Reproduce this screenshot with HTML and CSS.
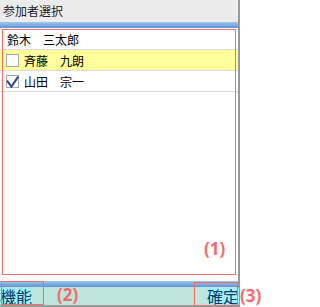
FILE: index.html
```html
<!DOCTYPE html>
<html lang="ja">
<head>
<meta charset="utf-8">
<link rel="stylesheet" href="styles.css">
</head>
<body>
<div class="stage">
  <div class="frame">
    <div class="title">参加者選択</div>
    <div class="bar"></div>
    <div class="list">
      <div class="row"><span class="name plain">鈴木　三太郎</span></div>
      <div class="row selected">
        <span class="check"></span><span class="name">斉藤　九朗</span>
      </div>
      <div class="row">
        <span class="check">
          <svg viewBox="0 0 13 13" width="13" height="13"><path d="M1 5.6 L5.4 11.6 L12.2 1.6" fill="none" stroke="#36458a" stroke-width="2" stroke-linejoin="miter"/></svg>
        </span><span class="name">山田　宗一</span>
      </div>
    </div>
    <div class="bar"></div>
    <div class="footer">
      <span class="softkey">機能</span>
      <span class="softkey">確定</span>
    </div>
  </div>
  <div class="note box1"></div>
  <div class="note label1">(1)</div>
  <div class="note box2"></div>
  <div class="note label2">(2)</div>
  <div class="note box3"></div>
  <div class="note label3">(3)</div>
</div>
</body>
</html>
```
FILE: styles.css
```css
html, body {
  margin: 0;
  padding: 0;
  background: #fff;
}
body {
  font-family: "Noto Sans CJK JP", "Noto Sans", sans-serif;
}
.stage {
  position: relative;
  width: 270px;
  height: 307px;
  overflow: hidden;
}
.frame {
  width: 238px;
  height: 305px;
  border-right: 2px solid #9a9a9a;
  border-bottom: 2px solid #9a9a9a;
  display: flex;
  flex-direction: column;
}
.title {
  height: 22px;
  background: #ececec;
  font-size: 12px;
  line-height: 22px;
  padding-left: 3px;
  color: #222;
}
.bar {
  height: 6px;
  background: linear-gradient(#a3c6ea, #5d97d6);
}
.list {
  flex: 1;
  padding-top: 1px;
  background: #fff;
}
.row {
  height: 20px;
  border-bottom: 1px solid #dcdcdc;
  display: flex;
  align-items: center;
  font-size: 12px;
  color: #000;
}
.row.selected {
  background: #ffff9c;
}
.check {
  box-sizing: border-box;
  width: 13px;
  height: 13px;
  margin-left: 6px;
  margin-right: 5px;
  border: 1px solid #a6a6a6;
  background: #fff;
  position: relative;
}
.check svg {
  position: absolute;
  left: -1px;
  top: -1px;
}
.name.plain {
  padding-left: 7px;
}
.footer {
  height: 18px;
  background: #bde5dc;
  display: flex;
  justify-content: space-between;
  align-items: center;
}
.softkey {
  font-size: 16px;
  line-height: 17px;
  color: #0b3a6c;
  background: #9ff2fd;
}
.footer .softkey:last-child {
  margin-right: -1px;
}
.note {
  position: absolute;
}
.box1 {
  left: 2px;
  top: 29px;
  width: 232px;
  height: 244px;
  border: 1px solid #f76a6a;
}
.box2 {
  left: 1px;
  top: 281px;
  width: 41px;
  height: 22px;
  border: 1px solid #f76a6a;
}
.box3 {
  left: 194px;
  top: 282px;
  width: 42px;
  height: 22px;
  border: 1px solid #f76a6a;
}
.label1, .label2, .label3 {
  font-family: "Open Sans", "Noto Sans", sans-serif;
  font-weight: bold;
  font-size: 17px;
  line-height: 20px;
  color: #f46b6b;
}
.label1 {
  left: 204px;
  top: 239px;
}
.label2 {
  left: 57px;
  top: 285px;
}
.label3 {
  left: 240px;
  top: 286px;
}
```
